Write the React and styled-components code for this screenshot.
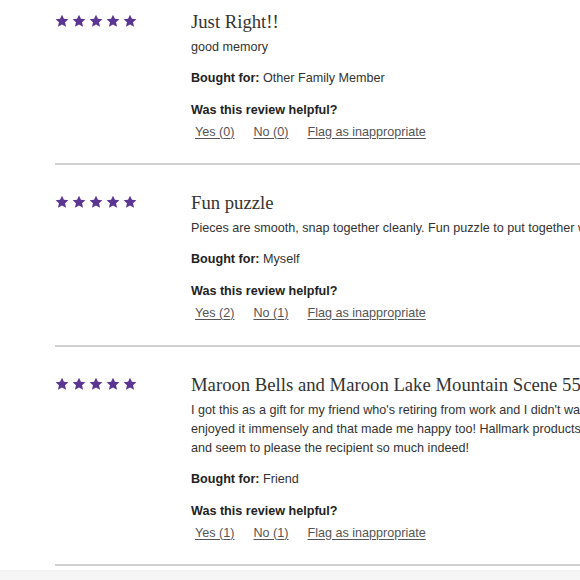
import React from "react";
import styled, { createGlobalStyle } from "styled-components";

const GlobalStyle = createGlobalStyle`
  html, body {
    margin: 0;
    padding: 0;
    background: #fff;
    overflow: hidden;
  }
  body {
    font-family: "Liberation Sans", Arial, sans-serif;
    color: #333;
  }
`;

// Styled Components

const Page = styled.div`
  width: 980px;
`;

const ReviewList = styled.div`
  padding-left: 55px;
`;

const Review = styled.div`
  display: flex;
  padding: 26px 0 21.5px;
  border-bottom: 2px solid #d0d0d0;

  &:first-child {
    padding-top: 9.5px;
  }
`;

const Stars = styled.div`
  flex: 0 0 136px;
  display: flex;
  gap: 3px;
  padding-top: 4px;
  height: 14px;
`;

const Content = styled.div`
  flex: 1;
`;

const Title = styled.h3`
  margin: 0 0 4px;
  font-family: "Liberation Serif", "Times New Roman", serif;
  font-weight: 400;
  font-size: 18.7px;
  line-height: 24px;
  color: #333;
`;

const Body = styled.p`
  margin: 0 0 12px;
  font-size: 12.6px;
  line-height: 19px;
  white-space: nowrap;
`;

const Label = styled.p`
  margin: 0 0 13px;
  font-size: 12.6px;
  line-height: 19px;

  strong {
    font-weight: 700;
    color: #222;
  }
`;

const Question = styled.p`
  margin: 0 0 3px;
  font-size: 12.6px;
  line-height: 19px;
  font-weight: 700;
  color: #222;
`;

const Links = styled.div`
  display: flex;
  gap: 11px;
`;

const LinkButton = styled.a`
  padding: 0 4px;
  font-size: 12.6px;
  line-height: 19px;
  color: #555;
  text-decoration: underline;
  text-underline-offset: 2px;
  cursor: pointer;
`;

const Footer = styled.div`
  height: 20px;
  margin-top: 4px;
  background: linear-gradient(#f4f4f4, #f8f8f8);
`;

function Star() {
  return (
    <svg width="14" height="14" viewBox="0 0 24 24">
      <path
        fill="#5b3592"
        d="M12 1.2l3.3 7.1 7.7.8-5.8 5.2 1.7 7.6L12 18l-6.9 3.9 1.7-7.6L1 9.1l7.7-.8z"
      />
    </svg>
  );
}

const reviews = [
  {
    title: "Just Right!!",
    lines: ["good memory"],
    boughtFor: "Other Family Member",
    yes: 0,
    no: 0,
  },
  {
    title: "Fun puzzle",
    lines: [
      "Pieces are smooth, snap together cleanly. Fun puzzle to put together with the whole family over the holidays.",
    ],
    boughtFor: "Myself",
    yes: 2,
    no: 1,
  },
  {
    title: "Maroon Bells and Maroon Lake Mountain Scene 550-Piece Puzzle",
    lines: [
      "I got this as a gift for my friend who's retiring from work and I didn't want to give something ordinary. She",
      "enjoyed it immensely and that made me happy too! Hallmark products are always such great quality",
      "and seem to please the recipient so much indeed!",
    ],
    boughtFor: "Friend",
    yes: 1,
    no: 1,
  },
];

function App() {
  return (
    <Page>
      <GlobalStyle />
      <ReviewList>
        {reviews.map((r) => (
          <Review key={r.title}>
            <Stars>
              {[0, 1, 2, 3, 4].map((i) => (
                <Star key={i} />
              ))}
            </Stars>
            <Content>
              <Title>{r.title}</Title>
              <Body>
                {r.lines.map((line, i) => (
                  <React.Fragment key={i}>
                    {i > 0 && <br />}
                    {line}
                  </React.Fragment>
                ))}
              </Body>
              <Label>
                <strong>Bought for:</strong> {r.boughtFor}
              </Label>
              <Question>Was this review helpful?</Question>
              <Links>
                <LinkButton>Yes ({r.yes})</LinkButton>
                <LinkButton>No ({r.no})</LinkButton>
                <LinkButton>Flag as inappropriate</LinkButton>
              </Links>
            </Content>
          </Review>
        ))}
      </ReviewList>
      <Footer />
    </Page>
  );
}

export default App;
